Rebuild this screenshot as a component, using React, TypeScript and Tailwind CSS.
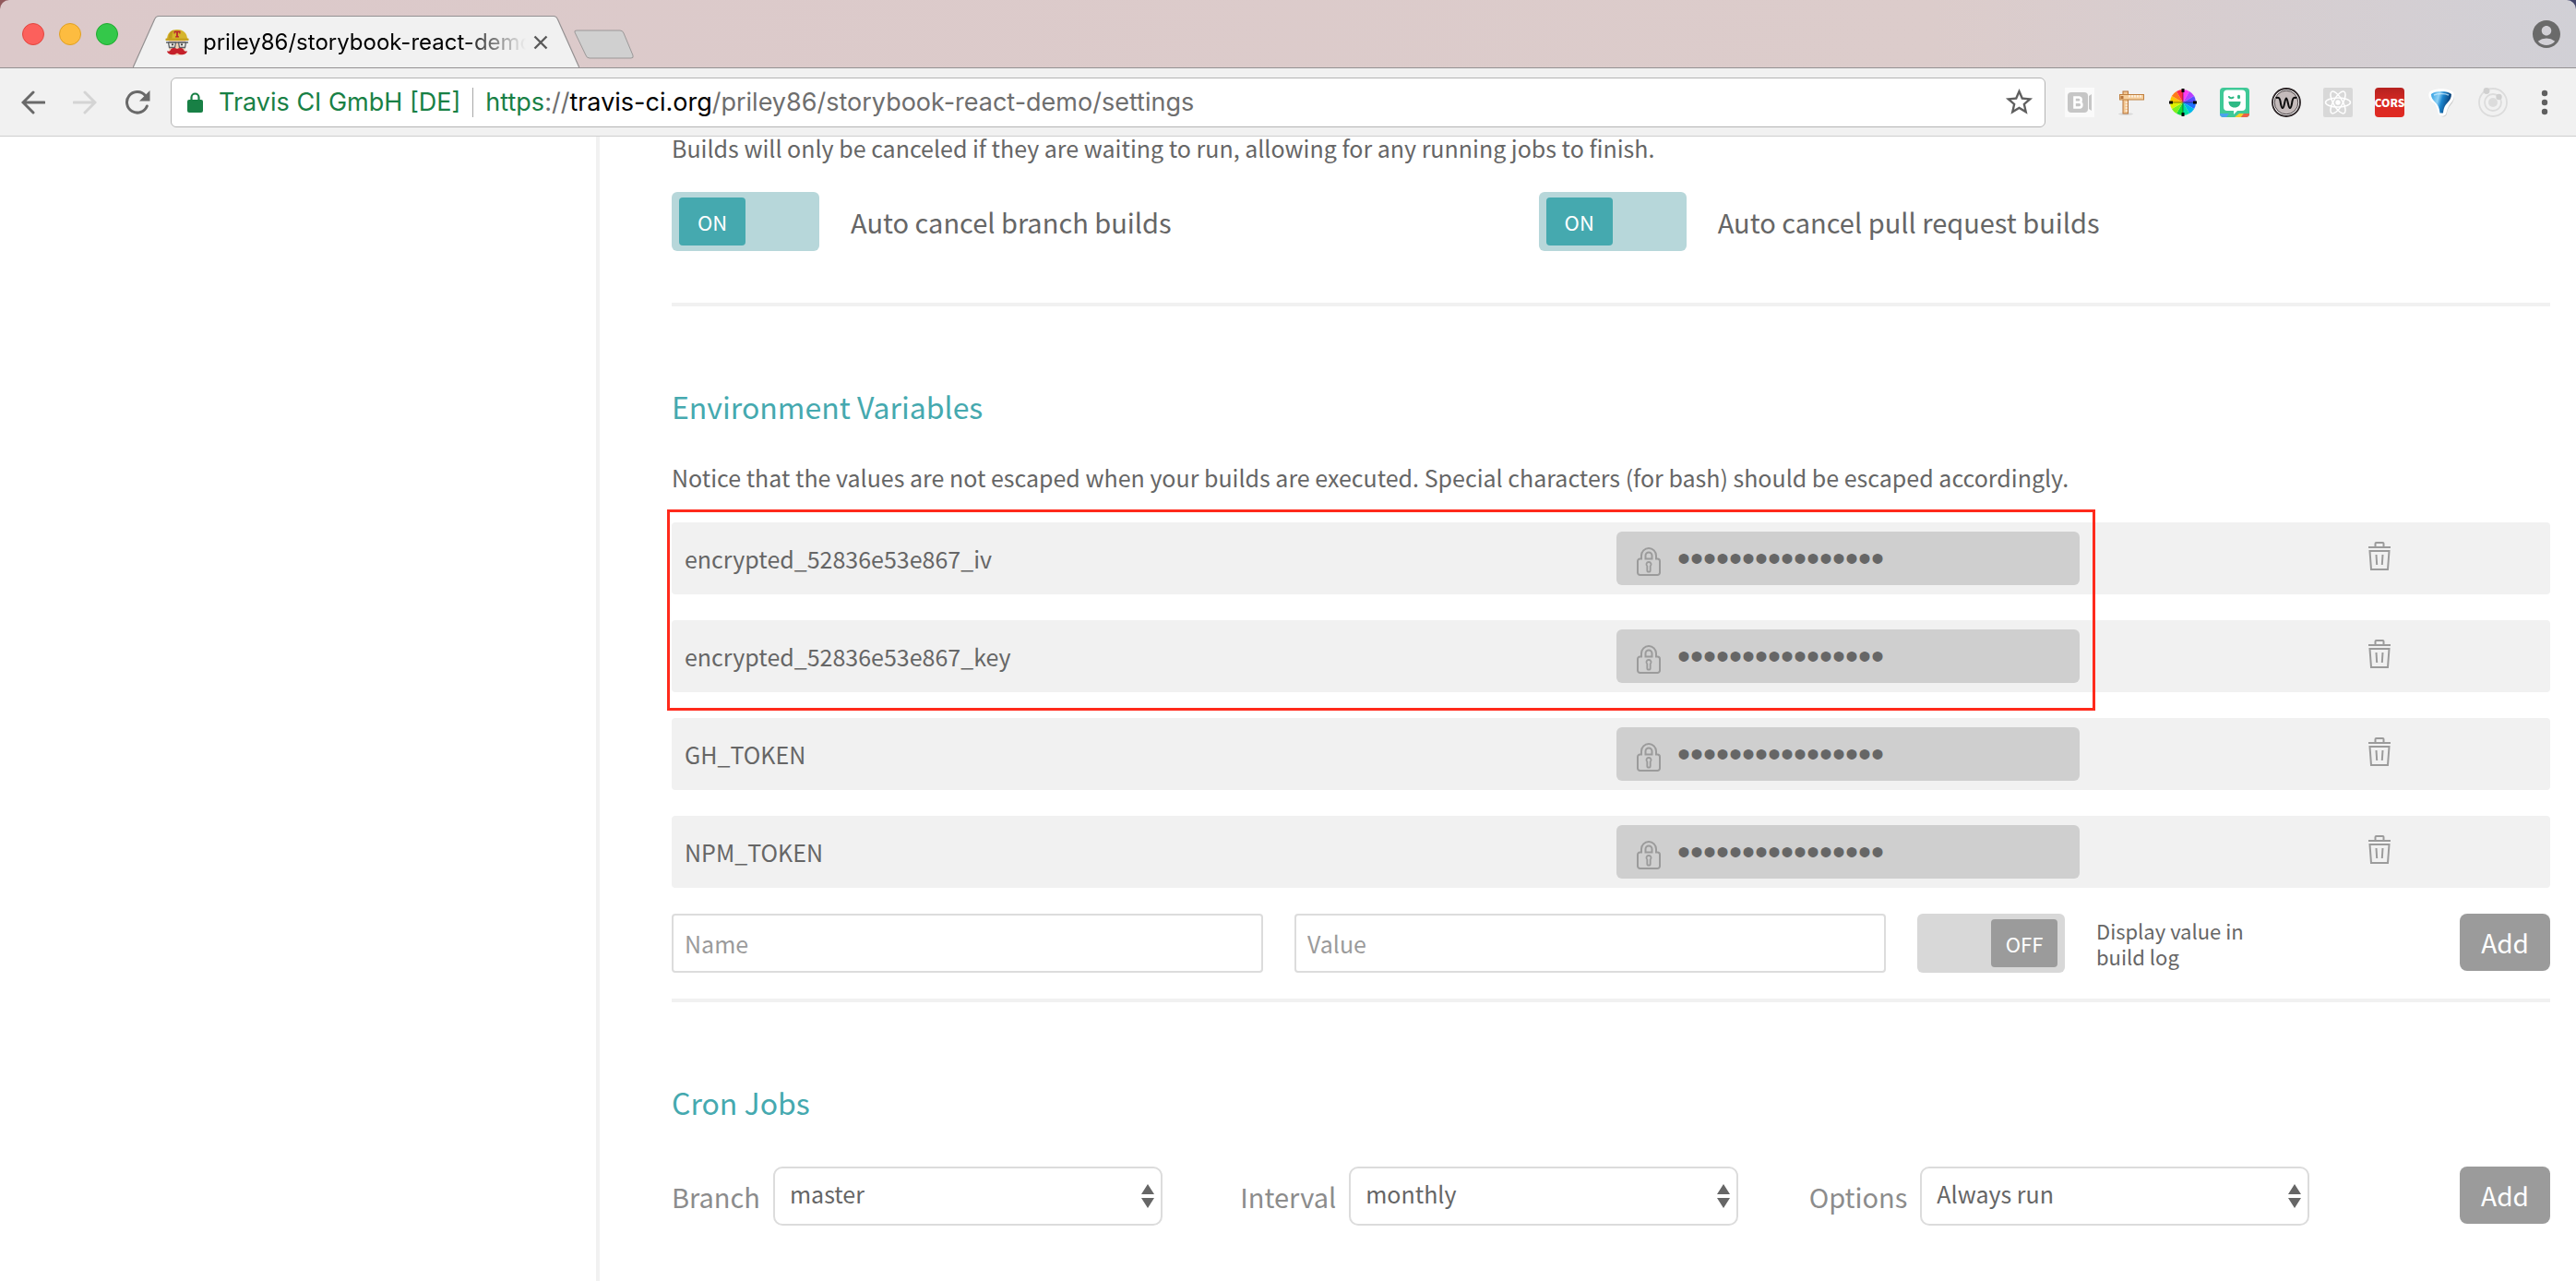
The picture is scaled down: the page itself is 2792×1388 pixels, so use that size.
import React, { useState } from "react";
import { MdAccountCircle, MdStarBorder } from "react-icons/md";

const variables = [
  "encrypted_52836e53e867_iv",
  "encrypted_52836e53e867_key",
  "GH_TOKEN",
  "NPM_TOKEN",
];

/* ---------- browser chrome icons ---------- */

function Mascot() {
  return (
    <svg viewBox="0 0 26 30" className="h-[30px] w-[26px] shrink-0" aria-hidden="true">
      <path d="M4 12h18v9c0 5-4 8-9 8s-9-3-9-8z" fill="#efd2b5" />
      <path d="M2 12C2 5 6 1 13 1s11 4 11 11z" fill="#d6b52c" />
      <path d="M9 1.6C5 3 3.5 7 3.5 11h4C7.500 7 8 4 9 1.600z" fill="#bf9a1c" />
      <path d="M1 10.500h24c.7 0 1 2.500 0 2.500H1c-1 0-.7-2.500 0-2.500z" fill="#c7a21f" />
      <path d="M9.500 2.500h7v3h-1.200V4.200h-1.400v4h1.100v1.300h-4V8.200h1.100v-4h-1.400v1.300H9.500z" fill="#b8282c" />
      <path d="M1 15h24" stroke="#5e6266" strokeWidth="1.400" />
      <path d="M3.500 15h8l-1 5.500H4.500zM14.500 15h8l-1 5.500h-6z" fill="#e8e6e0" stroke="#5e6266" strokeWidth="1.300" />
      <circle cx="8" cy="17.300" r="1.100" fill="#3a3a3a" />
      <circle cx="18" cy="17.300" r="1.100" fill="#3a3a3a" />
      <path d="M13 22c2-1.500 6-1.500 7 1 .8 1.500 2.500 2 4 1.200-.5 3-4 4.300-7 4-2-.2-3-.8-4-1.600-1 .8-2 1.400-4 1.600-3 .3-6.500-1-7-4 1.500.8 3.200.3 4-1.200 1-2.500 5-2.500 7-1z" fill="#c5202a" />
    </svg>
  );
}

function BackIcon() {
  return (
    <svg viewBox="0 0 26 26" className="size-[26px]" fill="none" stroke="currentColor" strokeWidth="3" aria-hidden="true">
      <path d="M25 13H3M13 2 2 13l11 11" strokeLinecap="round" />
    </svg>
  );
}

function ForwardIcon() {
  return (
    <svg viewBox="0 0 26 26" className="size-[26px]" fill="none" stroke="currentColor" strokeWidth="3" aria-hidden="true">
      <path d="M1 13h22M13 2l11 11-11 11" strokeLinecap="round" />
    </svg>
  );
}

function ReloadIcon() {
  return (
    <svg viewBox="0 0 28 26" className="h-[26px] w-7" aria-hidden="true">
      <path d="M22.200 5.200A11.300 11.300 0 1 0 24.300 17" fill="none" stroke="currentColor" strokeWidth="3" strokeLinecap="round" />
      <path d="M27.500 0v11.500H16z" fill="currentColor" />
    </svg>
  );
}

function SecureIcon() {
  return (
    <svg viewBox="0 0 17 22" className="h-[22px] w-[17px] shrink-0" aria-hidden="true">
      <rect x="0" y="8" width="17" height="14" rx="2" fill="#188045" />
      <path d="M4.500 9V5.500a4 4 0 0 1 8 0V9" fill="none" stroke="#188045" strokeWidth="2.200" />
    </svg>
  );
}

function BIcon() {
  return (
    <svg viewBox="0 0 32 32" className="size-8" aria-hidden="true">
      <rect width="32" height="32" fill="#fafafa" />
      <rect x="3" y="5" width="22" height="22" rx="4" fill="#c6c6c6" />
      <path d="m26 9 3-2v18l-3-2z" fill="#c6c6c6" />
      <path d="M10.500 10.500h5a2.700 2.700 0 0 1 0 5.300h-5zM10.500 15.800h5.500a2.900 2.900 0 0 1 0 5.700h-5.500z" fill="none" stroke="#fff" strokeWidth="2.600" />
    </svg>
  );
}

function RulerIcon() {
  return (
    <svg viewBox="0 0 32 32" className="size-8" aria-hidden="true">
      <ellipse cx="10" cy="28.500" rx="8" ry="1.500" fill="#d9d9d9" />
      <rect x="7" y="4" width="5.500" height="24" fill="#f3c792" stroke="#b5733a" />
      <rect x="3.500" y="7.500" width="26" height="5.500" fill="#f6cf9e" stroke="#c0803f" />
      <path d="M14 8v2.500M17 8v2.500M20 8v2.500M23 8v2.500M26 8v2.500M9.500 16h2.500M9.500 19h2.500M9.500 22h2.500M9.500 25h2.500" stroke="#fff" strokeWidth="1.200" />
      <rect x="4.500" y="9" width="3" height="3" fill="#b5733a" />
    </svg>
  );
}

const wheel = ["#ff3df0", "#b93dff", "#5b4dff", "#1f6dff", "#00b8e8", "#00e0a0", "#12dd3a", "#7df01a", "#e0f000", "#ffc400", "#ff7a1a", "#ff2a4a"];

function WheelIcon() {
  const at = (deg: number) => {
    const a = ((deg - 90) * Math.PI) / 180;
    return `${16 + 14 * Math.cos(a)} ${16 + 14 * Math.sin(a)}`;
  };
  return (
    <svg viewBox="0 0 32 32" className="size-8" aria-hidden="true">
      {wheel.map((c, i) => (
        <path key={c} d={`M16 16L${at(i * 30)}A14 14 0 0 1 ${at(i * 30 + 30)}Z`} fill={c} />
      ))}
      <path d="M16 3v26M3 16h26" stroke="#111" strokeWidth="1" opacity="0.5" />
      <path d="M16 1v4M16 27v4M1 16h4M27 16h4" stroke="#000" strokeWidth="3" />
    </svg>
  );
}

function BitmojiIcon() {
  return (
    <svg viewBox="0 0 32 32" className="size-8" aria-hidden="true">
      <clipPath id="moji"><rect width="32" height="32" rx="4" /></clipPath>
      <g clipPath="url(#moji)">
        <rect width="32" height="32" fill="#3fc997" />
        <path d="M0 28h10l-3 4H0z" fill="#4aa3ec" />
        <path d="M16 32l5-4h5l-3 4z" fill="#f7cf2b" />
        <path d="M23 32l3-4h6v4z" fill="#ee5f47" />
        <path d="M8 2.500h16a4 4 0 0 1 4 4V21a4 4 0 0 1-4 4h-5l-4 4v-4H8a4 4 0 0 1-4-4V6.500a4 4 0 0 1 4-4z" fill="#fff" />
        <path d="M9.500 15h13c0 4-2.500 6.500-6.500 6.500S9.500 19 9.500 15z" fill="#2fb985" />
        <path d="M10 10c.8 1.500 3.500 1.500 4.500.5" fill="none" stroke="#2fb985" strokeWidth="2" strokeLinecap="round" />
        <ellipse cx="20.500" cy="10" rx="1.600" ry="2.300" fill="#2fb985" />
      </g>
    </svg>
  );
}

function WIcon() {
  return (
    <svg viewBox="0 0 32 32" className="size-8" aria-hidden="true">
      <circle cx="16" cy="16" r="15" fill="#fff" stroke="#2a2224" strokeWidth="1.800" />
      <circle cx="16" cy="16" r="12.800" fill="#c4bbbb" stroke="#4c4446" />
      <path d="M5.500 11c2.500-1 3.500 1 4 3.500.6 3.500 1 7.500 2.500 7.500 2 0 2.300-10.500 4-10.500S18 22 20 22c1.500 0 1.900-4 2.500-7.500.5-2.500 1.500-4.500 4-3.500" fill="none" stroke="#0d0d0d" strokeWidth="2" strokeLinecap="round" />
    </svg>
  );
}

function ReactIcon() {
  return (
    <svg viewBox="0 0 32 32" className="size-8" aria-hidden="true">
      <rect width="32" height="32" rx="2" fill="#d8d8d8" />
      <circle cx="16" cy="16" r="2.700" fill="#fff" />
      <g fill="none" stroke="#fff" strokeWidth="1.500">
        <ellipse cx="16" cy="16" rx="13.500" ry="5" />
        <ellipse cx="16" cy="16" rx="13.500" ry="5" transform="rotate(60 16 16)" />
        <ellipse cx="16" cy="16" rx="13.500" ry="5" transform="rotate(120 16 16)" />
      </g>
    </svg>
  );
}

function BalloonIcon() {
  return (
    <svg viewBox="0 0 32 32" className="size-8" aria-hidden="true">
      <defs>
        <linearGradient id="balloon" x1="0" x2="1" y1="0" y2="0.300">
          <stop offset="0" stopColor="#2b9be0" />
          <stop offset="0.400" stopColor="#8fd2f6" />
          <stop offset="0.600" stopColor="#1c86cf" />
          <stop offset="1" stopColor="#093a70" />
        </linearGradient>
      </defs>
      <path d="M5 6C9 2 24 2 28 6c2 4 0 9-3 12-2.500 3-3.500 5-4 9-.4 4.500-7 4.500-8 0-.5-4-2-6-4.500-9C5 14 3 10 5 6z" transform="translate(1 1)" fill="#cfcfcf" />
      <path d="M3 5C8 0 24 0 29 5c2 4 0 9-3 12-2.500 3-3.500 6-4.500 10-.6 5-8 5-9 0-.5-4-2-7-4.500-10C4 14 1 9 3 5z" fill="#fff" />
      <path d="M5 7c4-4 18-4 22 0 0 4-2 7-4 9-3 3-4.500 6-5 11.500h-3.500C14 22 12.500 19 9.500 16 7 13 5 11 5 7z" fill="url(#balloon)" />
      <path d="M8 8c4-2 12-2 16 0" stroke="#d8f1ff" strokeWidth="1.500" fill="none" opacity="0.700" />
    </svg>
  );
}

function OrbitIcon() {
  return (
    <svg viewBox="0 0 32 32" className="size-8" aria-hidden="true">
      <g fill="none" stroke="#dcdcdc" strokeWidth="1.800">
        <circle cx="16" cy="16" r="15" />
        <circle cx="16" cy="16" r="9" />
      </g>
      <circle cx="16" cy="16" r="5" fill="#dcdcdc" />
      <circle cx="9" cy="3.500" r="3.400" fill="#d0d0d0" />
      <circle cx="22.500" cy="10" r="3.200" fill="#d0d0d0" />
    </svg>
  );
}

const extensions = [
  { name: "Bootstrap recorder", icon: <BIcon /> },
  { name: "Page ruler", icon: <RulerIcon /> },
  { name: "Color picker", icon: <WheelIcon /> },
  { name: "Bitmoji", icon: <BitmojiIcon /> },
  { name: "WhatFont", icon: <WIcon /> },
  { name: "React tools", icon: <ReactIcon /> },
  {
    name: "CORS",
    icon: (
      <span className="flex size-8 items-center justify-center rounded bg-linear-to-b from-[#b5221f] via-[#d92a24] to-[#e02a22] font-['Noto_Sans_CJK_SC',sans-serif] text-[12px] font-black text-white">
        CORS
      </span>
    ),
  },
  { name: "Balloon", icon: <BalloonIcon /> },
  { name: "Orbit", icon: <OrbitIcon /> },
];

function TabBar() {
  return (
    <div className="bg-linear-to-r from-[#91595c] to-[#45476c]">
      <div className="flex h-[74px] items-end overflow-hidden rounded-t-[10px] border-b border-[#949192] bg-linear-to-r from-[#dcc9ca] via-[#dccccb] via-75% to-[#d1d0d6]">
        <div className="flex h-[73px] items-center gap-4 pl-6">
          <button aria-label="Close window" className="size-6 rounded-full border border-[#e2463f] bg-[#fc605c]" />
          <button aria-label="Minimize window" className="size-6 rounded-full border border-[#dfa023] bg-[#fdbc40]" />
          <button aria-label="Zoom window" className="size-6 rounded-full border border-[#1faa2f] bg-[#34c84a]" />
        </div>
        <div className="relative -mb-px ml-4 flex h-[57px] w-[484px] items-center pr-[34px] pl-[35px]">
          <svg viewBox="0 0 484 57" className="absolute inset-0 h-full w-full" aria-hidden="true">
            <path d="M0 57L23.500 4q1.500-3.500 4.500-3.500H456q3 0 4.500 3.500L484 57z" fill="#f1f1f1" />
            <path d="M0 56.500L23.500 4q1.500-3.500 4.500-3.500H456q3 0 4.500 3.500L484 56.500" fill="none" stroke="#949192" strokeWidth="1.200" />
          </svg>
          <span className="relative"><Mascot /></span>
          <span className="relative ml-[15px] w-[350px] overflow-hidden bg-linear-to-r from-black from-80% to-transparent bg-clip-text font-[Inter,sans-serif] text-[24px] leading-8 whitespace-nowrap text-transparent">
            priley86/storybook-react-demo
          </span>
          <button aria-label="Close tab" className="relative ml-2 text-[#5a5a5a]">
            <svg viewBox="0 0 16 16" className="size-4" stroke="currentColor" strokeWidth="2.400" aria-hidden="true">
              <path d="M1.500 1.500l13 13M14.500 1.500l-13 13" />
            </svg>
          </button>
        </div>
        <button aria-label="New tab" className="-ml-1.5 self-center">
          <svg viewBox="0 0 66 33" className="mt-6 h-[33px] w-[66px]" aria-hidden="true">
            <path d="M3 1h47q3 0 4 3l10 24q1 3-2 3H17q-3 0-4-3L1 3q-1-2 2-2z" fill="#d0d0d0" stroke="#9b9898" />
          </svg>
        </button>
        <button aria-label="Profile" className="mr-3.5 ml-auto flex h-[73px] items-center text-[#6a6a6a]">
          <MdAccountCircle className="size-9" />
        </button>
      </div>
    </div>
  );
}

function Toolbar() {
  return (
    <div className="flex h-[74px] items-center border-b border-[#cfcfcf] bg-[#f1f1f1] pl-[23px]">
      <button aria-label="Back" className="text-[#696969]"><BackIcon /></button>
      <button aria-label="Forward" className="ml-[30px] text-[#d4d4d4]"><ForwardIcon /></button>
      <button aria-label="Reload" className="ml-[30px] text-[#696969]"><ReloadIcon /></button>
      <div className="ml-[22px] flex h-[54px] min-w-0 flex-1 items-center rounded-md border border-[#b4b4b4] bg-white pr-2.5 pl-[17px] font-[Inter,sans-serif] text-[27px] leading-9 whitespace-nowrap">
        <SecureIcon />
        <span className="ml-[17px] text-[#188045]">Travis CI GmbH [DE]</span>
        <span className="mx-[13px] h-8 w-px bg-[#a8a8a8]" />
        <div role="textbox" aria-label="Address" className="min-w-0 flex-1 overflow-hidden text-[#6e6e6e]">
          <span className="text-[#188045]">https</span>://<span className="text-black">travis-ci.org</span>/priley86/storybook-react-demo/settings
        </div>
        <button aria-label="Bookmark this page" className="text-[#5f5f5f]"><MdStarBorder className="size-[35px]" /></button>
      </div>
      <div className="flex items-center gap-6 pl-[21px]">
        {extensions.map((e) => (
          <button key={e.name} aria-label={e.name}>{e.icon}</button>
        ))}
      </div>
      <button aria-label="Menu" className="mr-[30px] ml-9">
        <svg viewBox="0 0 8 28" className="h-7 w-2" fill="#5f5f5f" aria-hidden="true">
          <circle cx="4" cy="4" r="3.200" /><circle cx="4" cy="14" r="3.200" /><circle cx="4" cy="24" r="3.200" />
        </svg>
      </button>
    </div>
  );
}

/* ---------- settings page ---------- */

function PadlockIcon() {
  return (
    <svg viewBox="0 0 26 32" className="mt-1.5 h-8 w-[26px] shrink-0" fill="none" stroke="#9b9b9b" strokeWidth="2" aria-hidden="true">
      <path d="M5 13.500V10a8 8 0 0 1 16 0v3.500h1.500a2.500 2.500 0 0 1 2.500 2.500v12.500a2.500 2.500 0 0 1-2.500 2.500h-19A2.500 2.500 0 0 1 1 28.500V16a2.500 2.500 0 0 1 2.500-2.500z" />
      <path d="M9.500 13.500V10a3.500 3.500 0 0 1 7 0v3.500z" />
      <path d="M13 17a2.500 2.500 0 0 1 1.700 4.400V26a1.700 1.700 0 0 1-3.400 0v-4.600A2.500 2.500 0 0 1 13 17z" strokeWidth="1.800" />
    </svg>
  );
}

function TrashIcon() {
  return (
    <svg viewBox="0 0 24 32" className="h-8 w-6" fill="none" stroke="#9b9b9b" strokeWidth="2" aria-hidden="true">
      <path d="M0 7h24M7.500 6.500V3a1 1 0 0 1 1-1h7a1 1 0 0 1 1 1v3.500" />
      <path d="M1.500 11h21l-1.500 20H3zM8.500 15l.7 11M15.500 15l-.7 11" />
    </svg>
  );
}

function Toggle({ id, initial }: { id: string; initial: boolean }) {
  const [on, setOn] = useState(initial);
  return (
    <label
      htmlFor={id}
      className={
        on
          ? "relative flex h-16 w-40 shrink-0 cursor-pointer items-center rounded-md bg-[#b7d7da] px-2"
          : "relative flex h-16 w-40 shrink-0 cursor-pointer items-center justify-end rounded-md bg-[#d8d8d8] px-2"
      }
    >
      <input id={id} type="checkbox" className="sr-only" checked={on} onChange={(e) => setOn(e.target.checked)} />
      <span
        className={
          on
            ? "flex h-[52px] w-[72px] items-center justify-center rounded bg-[#45a9af] text-[22px] leading-8 text-white"
            : "flex h-[52px] w-[72px] items-center justify-center rounded bg-[#9b9b9b] text-[22px] leading-8 text-white"
        }
      >
        {on ? "ON" : "OFF"}
      </span>
    </label>
  );
}

function AddButton() {
  return (
    <button className="h-[62px] w-[98px] shrink-0 rounded-lg bg-[#9b9b9b] text-[28px] leading-10 text-white">Add</button>
  );
}

function SelectField({ id, label, value }: { id: string; label: string; value: string }) {
  return (
    <div className="flex items-center gap-3.5">
      <label htmlFor={id} className="text-[29px] leading-10 text-[#8c8c8c]">{label}</label>
      <div className="relative w-[422px]">
        <select id={id} className="h-16 w-full appearance-none rounded-[10px] border-2 border-[#dcdcdc] bg-white pr-10 pb-1 pl-4 text-[25px] text-[#666]">
          <option>{value}</option>
        </select>
        <svg viewBox="0 0 14 28" className="pointer-events-none absolute top-[18px] right-[9px] h-7 w-3.5" fill="#666" aria-hidden="true">
          <path d="M7 1l7 11H0zM7 27l7-11H0z" />
        </svg>
      </div>
    </div>
  );
}

export default function App() {
  return (
    <div className="flex min-h-screen flex-col overflow-hidden bg-white font-['Noto_Sans_CJK_SC','Noto_Sans',sans-serif] text-[#666]">
      <header>
        <TabBar />
        <Toolbar />
      </header>
      <div className="flex flex-1">
        <aside className="w-[650px] shrink-0 border-r-4 border-[#f1f1f1]" />
        <main className="min-w-0 flex-1 pr-7 pl-[78px]">
          <section className="border-b-4 border-[#f1f1f1] pb-14">
            <p className="text-[25px] leading-6">
              Builds will only be canceled if they are waiting to run, allowing for any running jobs to finish.
            </p>
            <div className="mt-9 grid grid-cols-[6fr_7fr]">
              <div className="flex items-center gap-[34px]">
                <Toggle id="cancel-branch" initial />
                <label htmlFor="cancel-branch" className="text-[29px] leading-10">Auto cancel branch builds</label>
              </div>
              <div className="flex items-center gap-[34px]">
                <Toggle id="cancel-pr" initial />
                <label htmlFor="cancel-pr" className="text-[29px] leading-10">Auto cancel pull request builds</label>
              </div>
            </div>
          </section>

          <section className="border-b-4 border-[#f1f1f1] pt-[84px] pb-7">
            <h2 className="text-[32px] leading-[48px] text-[#45a9af]">Environment Variables</h2>
            <p className="mt-[34px] text-[25px] leading-[38px]">
              Notice that the values are not escaped when your builds are executed. Special characters (for bash) should be escaped accordingly.
            </p>
            <div className="relative mt-[30px]">
              <ul className="flex flex-col gap-7">
                {variables.map((name) => (
                  <li key={name} className="grid h-[78px] grid-cols-[1024fr_502fr_510fr] items-center rounded bg-[#f1f1f1]">
                    <span className="pl-3.5 text-[25px] leading-[38px]">{name}</span>
                    <span className="flex h-[58px] items-center gap-[18px] rounded-md bg-[#cfcfcf] pl-[22px]">
                      <PadlockIcon />
                      <span className="font-['Liberation_Sans',sans-serif] text-[40px] leading-[58px]">••••••••••••••••</span>
                    </span>
                    <button aria-label={`Delete ${name}`} className="mr-[173px] mb-1.5 justify-self-end"><TrashIcon /></button>
                  </li>
                ))}
              </ul>
              <div className="pointer-events-none absolute -top-3.5 right-[24.2%] -left-[5px] h-[218px] border-3 border-[#ff2a1c]" />
            </div>
            <form className="mt-7 grid grid-cols-[1fr_1fr_686px] gap-[34px]" onSubmit={(e) => e.preventDefault()}>
              <input aria-label="Name" placeholder="Name" className="h-16 min-w-0 rounded border-2 border-[#dcdcdc] px-3 text-[25px] placeholder:text-[#9b9b9b]" />
              <input aria-label="Value" placeholder="Value" className="h-16 min-w-0 rounded border-2 border-[#dcdcdc] px-3 text-[25px] placeholder:text-[#9b9b9b]" />
              <div className="flex items-start">
                <Toggle id="display-value" initial={false} />
                <label htmlFor="display-value" className="ml-[34px] w-[180px] pt-1 text-[22px] leading-7">Display value in build log</label>
                <span className="ml-auto flex"><AddButton /></span>
              </div>
            </form>
          </section>

          <section className="pt-[84px]">
            <h2 className="text-[32px] leading-[48px] text-[#45a9af]">Cron Jobs</h2>
            <form className="mt-[46px] grid grid-cols-[1fr_1fr_1fr_187px]" onSubmit={(e) => e.preventDefault()}>
              <SelectField id="branch" label="Branch" value="master" />
              <SelectField id="interval" label="Interval" value="monthly" />
              <SelectField id="options" label="Options" value="Always run" />
              <span className="flex items-start justify-end"><AddButton /></span>
            </form>
          </section>
        </main>
      </div>
    </div>
  );
}
